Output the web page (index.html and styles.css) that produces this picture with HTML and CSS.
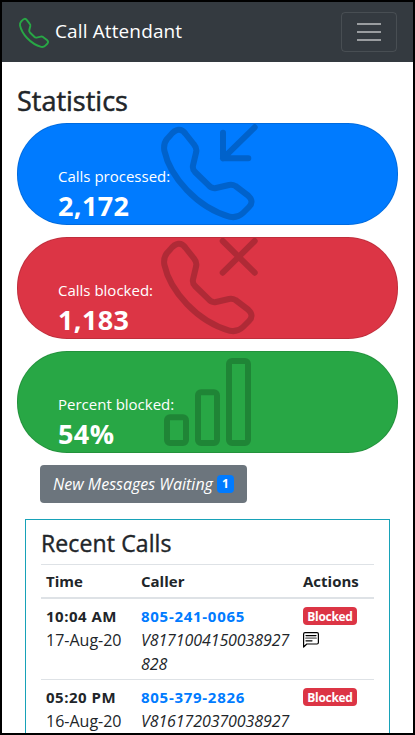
FILE: index.html
```html
<!DOCTYPE html>
<html lang="en">
<head>
<meta charset="utf-8">
<title>Call Attendant</title>
<link rel="stylesheet" href="styles.css">
</head>
<body>
<svg class="defs" aria-hidden="true">
  <defs>
    <path id="phone" d="M10 12.7C15.5 5.5 21.5 4.5 25.7 11L34 21.5Q37 25 36.2 29L33 42.5Q32.2 46 35 49L48 61.7Q51.500 66 56 65L69 62Q72.500 61.300 75.500 63L88 72.500Q94.500 78.500 89 84L83 90Q77.500 95.300 70 93.800C37 84.500 10 54 4.300 27.500Q3.300 20.500 7 16Z"/>
  </defs>
</svg>
<nav class="navbar">
  <a class="brand">
    <svg class="brand-icon" viewBox="-2 1 99.500 99.500"><use href="#phone"/></svg>
    <span>Call Attendant</span>
  </a>
  <button class="toggler" aria-label="Menu">
    <svg width="30" height="30" viewBox="0 0 30 30"><path d="M3 7h24M3 15h24M3 23h24"/></svg>
  </button>
</nav>
<main>
  <h1>Statistics</h1>
  <section class="stats">
    <div class="stat blue">
      <svg class="stat-icon" viewBox="0 0 100 102"><use href="#phone"/><path d="M63 9.700V35.300H88.300M63 35.300L94.700 4.300"/></svg>
      <p class="label">Calls processed:</p>
      <p class="value">2,172</p>
    </div>
    <div class="stat red">
      <svg class="stat-icon" viewBox="0 0 100 102"><use href="#phone"/><path d="M62.700 4L94.700 35.700M94.700 4L62.700 35.700"/></svg>
      <p class="label">Calls blocked:</p>
      <p class="value">1,183</p>
    </div>
    <div class="stat green">
      <svg class="stat-icon" viewBox="0 0 100 102"><rect x="7" y="66.300" width="19" height="25.700" rx="3"/><rect x="38" y="41.300" width="19" height="50.700" rx="3"/><rect x="69" y="10" width="19" height="82" rx="3"/></svg>
      <p class="label">Percent blocked:</p>
      <p class="value">54%</p>
    </div>
  </section>
  <button class="messages"><em>New Messages Waiting</em><span class="badge count">1</span></button>
  <section class="recent">
    <h2>Recent Calls</h2>
    <table>
      <colgroup><col class="time"><col class="caller"><col></colgroup>
      <thead><tr><th>Time</th><th>Caller</th><th>Actions</th></tr></thead>
      <tbody>
        <tr>
          <td><strong>10:04 AM</strong><br><span class="date">17-Aug-20</span></td>
          <td><a class="number">805-241-0065</a><br><em>V8171004150038927<br>828</em></td>
          <td><span class="badge danger">Blocked</span><svg class="note" viewBox="0 0 16 16"><path d="M.6 15V2Q.6.600 2 .600H14Q15.400.600 15.400 2V10.500Q15.400 12 14 12H3.800Z"/><path d="M3 3.600H13M3 8.800H9"/><path class="soft" d="M3 6.200H13"/></svg></td>
        </tr>
        <tr>
          <td><strong>05:20 PM</strong><br><span class="date">16-Aug-20</span></td>
          <td><a class="number">805-379-2826</a><br><em>V8161720370038927</em></td>
          <td><span class="badge danger">Blocked</span></td>
        </tr>
      </tbody>
    </table>
  </section>
</main>
</body>
</html>
```
FILE: styles.css
```css
* { box-sizing: border-box; }
html { height: 100%; overflow: hidden; }
body {
  margin: 0;
  height: 735px;
  border: 2px solid #000;
  overflow: hidden;
  background: #fff;
  color: #212529;
  font: 15px/24px "Open Sans", "Noto Sans", sans-serif;
}
.defs { position: absolute; width: 0; height: 0; }
svg { fill: none; stroke: currentColor; stroke-width: 6; stroke-linecap: round; stroke-linejoin: round; }
h1, h2, p { margin: 0; }
button { font: inherit; }

.navbar {
  display: flex;
  justify-content: space-between;
  align-items: center;
  height: 60px;
  padding: 0 16px;
  background: #343a40;
}
.brand { display: flex; align-items: center; color: #fff; font-size: 19px; letter-spacing: .12px; }
.brand-icon { width: 32px; height: 32px; margin: 2px 5px 0 0; color: #28a745; }
.brand span { margin-bottom: 2px; }
.toggler {
  display: flex;
  align-items: center;
  justify-content: center;
  width: 56px;
  height: 40px;
  padding: 0;
  border: 1px solid rgba(255, 255, 255, .1);
  border-radius: 4px;
  background: transparent;
  color: rgba(255, 255, 255, .5);
}
.toggler svg { stroke-width: 2; stroke-linecap: butt; }

main { padding: 22px 15px 0; }
h1 { height: 39px; font-size: 27px; line-height: 33px; font-weight: 500; letter-spacing: 0; -webkit-text-stroke: .5px currentColor; }
.stats { display: grid; gap: 12px; }
.stat {
  position: relative;
  height: 102px;
  padding: 40px 40px 0;
  border: 1px solid rgba(0, 0, 0, .125);
  border-radius: 50px;
  color: #fff;
}
.blue { background: #007bff; }
.red { background: #dc3545; }
.green { background: #28a745; }
.stat-icon { position: absolute; left: 142px; top: -1px; width: 100px; height: 102px; color: #000; opacity: .2; }
.label { position: relative; height: 25px; }
.value { position: relative; font-size: 27px; line-height: 34px; font-weight: 700; letter-spacing: .4px; }

.messages {
  display: flex;
  align-items: center;
  width: 207px;
  height: 38px;
  margin: 12px 0 16px 23px;
  padding: 0 13px;
  border: 0;
  border-radius: 4px;
  background: #6c757d;
  color: #fff;
  white-space: nowrap;
}
em, td { font-size: 16px; }
td em { letter-spacing: -.1px; }
.badge {
  display: block;
  border-radius: 4px;
  color: #fff;
  font-size: 12px;
  line-height: 18px;
  height: 18px;
  font-weight: 700;
  text-align: center;
}
.count { width: 17px; margin: 0 0 1px auto; background: #007bff; }
.danger { width: 54px; margin-top: 3px; background: #dc3545; letter-spacing: -.3px; line-height: 19px; }

.recent { margin: 0 8px; padding: 10px 15px; border: 1px solid #17a2b8; }
h2 { height: 34px; font-size: 23px; line-height: 27px; font-weight: 500; letter-spacing: .12px; -webkit-text-stroke: .4px currentColor; }
table { width: 333px; border-collapse: separate; border-spacing: 0; table-layout: fixed; }
.time { width: 95px; }
.caller { width: 162px; }
th, td { padding: 4px 0 4px 5px; border-top: 1px solid #dee2e6; text-align: left; vertical-align: top; white-space: nowrap; }
th { border-bottom: 2px solid #dee2e6; }
tbody td { padding: 5px 0 3px 5px; }
tbody tr:first-child td { border-top: 0; }
strong { font-size: 15px; letter-spacing: .5px; }
.number { color: #007bff; font-size: 15px; font-weight: 700; letter-spacing: .72px; }
.note { display: block; width: 16px; height: 16px; margin-top: 7px; color: #000; stroke-width: 1.200; }
.soft { stroke: #888; stroke-width: 1.800; }
```
